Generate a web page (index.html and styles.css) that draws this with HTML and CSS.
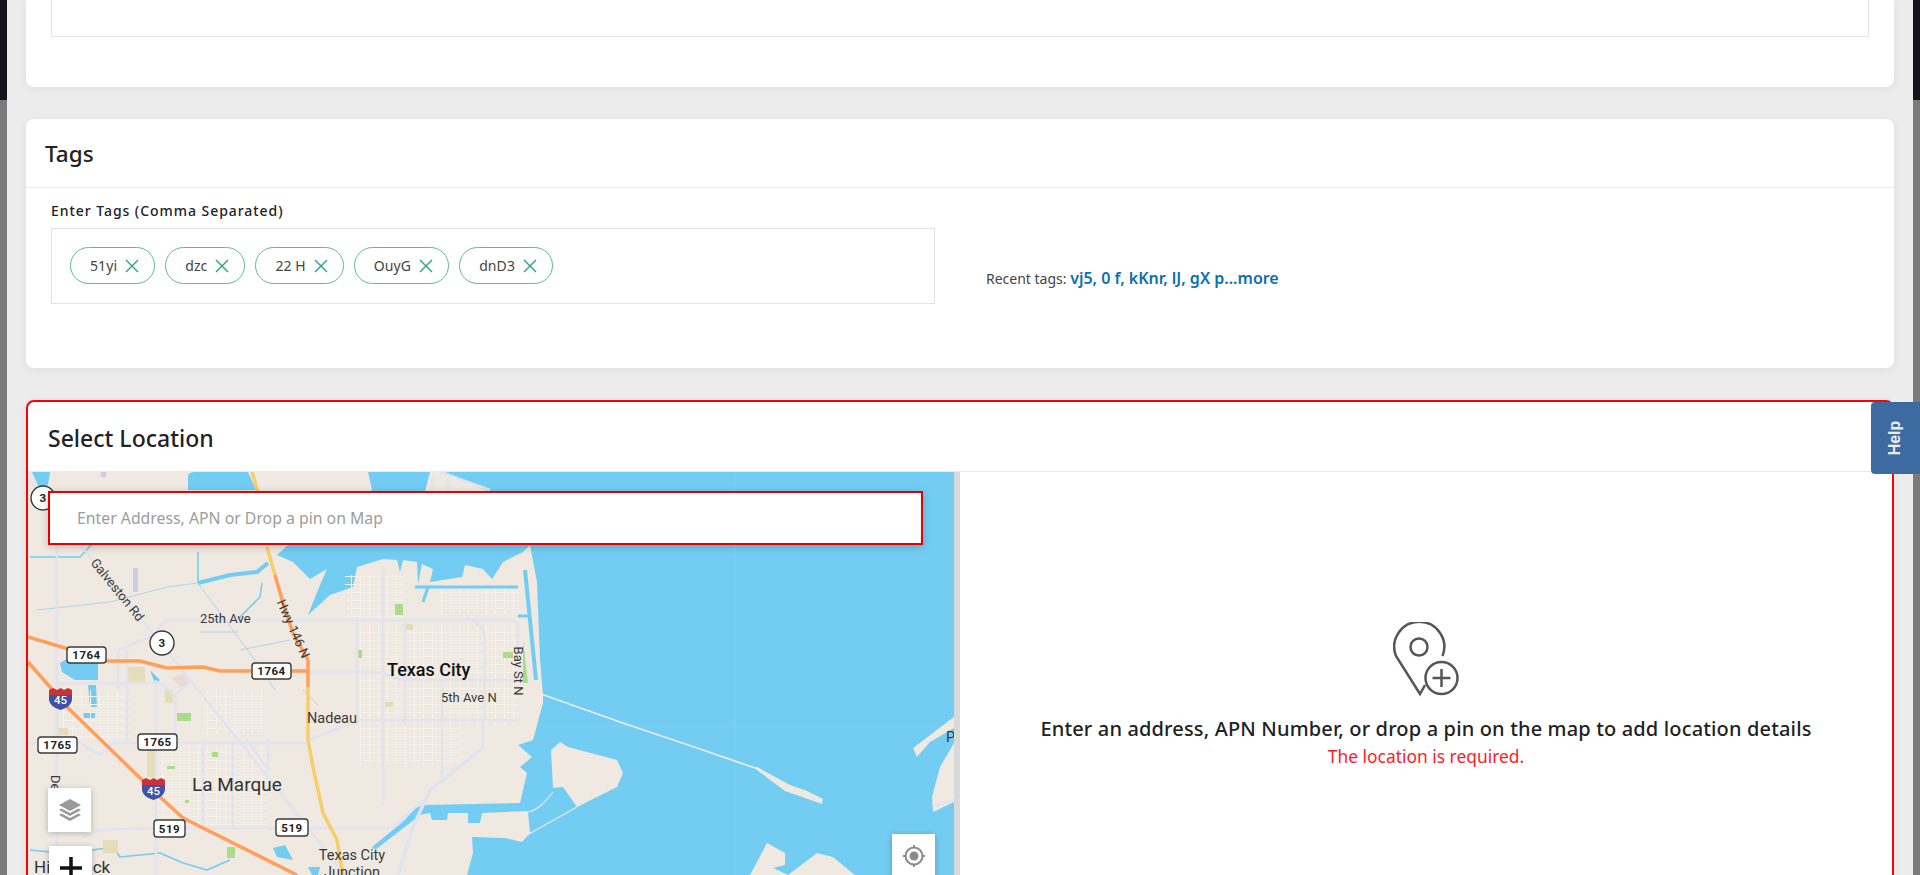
FILE: index.html
```html
<!DOCTYPE html>
<html lang="en">
<head>
  <meta charset="UTF-8">
  <title>Select Location</title>
  <link rel="stylesheet" href="styles.css">
</head>
<body>
  <div class="edge"></div>

  <main class="page">
    <section class="card card-top">
      <div class="top-box"></div>
    </section>

    <section class="card card-tags">
      <h2 class="card-title">Tags</h2>
      <div class="tags-body">
        <div class="tags-field">
          <label class="tags-label">Enter Tags (Comma Separated)</label>
          <div class="tags-box">
            <span class="chip">51yi <svg viewBox="0 0 14 14"><path d="M1 1l12 12M13 1L1 13"/></svg></span>
            <span class="chip">dzc <svg viewBox="0 0 14 14"><path d="M1 1l12 12M13 1L1 13"/></svg></span>
            <span class="chip">22 H <svg viewBox="0 0 14 14"><path d="M1 1l12 12M13 1L1 13"/></svg></span>
            <span class="chip">OuyG <svg viewBox="0 0 14 14"><path d="M1 1l12 12M13 1L1 13"/></svg></span>
            <span class="chip">dnD3 <svg viewBox="0 0 14 14"><path d="M1 1l12 12M13 1L1 13"/></svg></span>
          </div>
        </div>
        <p class="recent">Recent tags: <a href="#">vj5, 0 f, kKnr, lJ, gX p...more</a></p>
      </div>
    </section>

    <section class="card card-location">
      <h2 class="card-title">Select Location</h2>
      <div class="location-body">
        <div class="map">
          <svg class="map-art" viewBox="28 472 926 403" width="926" height="403">
            <defs>
              <pattern id="streets" width="9" height="8" patternUnits="userSpaceOnUse">
                <path d="M0 .5H9M.5 0V8" stroke="#f4f0ea" stroke-width="1" fill="none"/>
              </pattern>
            </defs>

            <rect class="water" x="28" y="472" width="926" height="403"/>
            <path class="seam" d="M735 472V875M28 726H954"/>

            <!-- mainland -->
            <path class="land" d="M28 472H368L372 490L287 546L277 555L293 562L310 579L327 569L320 585L308 615L330 595L353 587L357 567L383 559L397 560L400 572L403 560L417 562L418 584L422 564L433 569L430 582L462 577L465 565L483 569L492 579L503 562L523 552L530 545L537 582L540 659L543 695L543 703L533 740L518 745L532 757L520 767L527 773L520 803L528 812L530 833L522 842L505 838L472 837L473 853L467 875H28Z"/>
            <path class="land" d="M551 750L560 742L568 747L617 760L623 773L617 787L577 807L563 787L553 788Z"/>
            <path class="land" d="M750 875L767 843L785 853L785 865L773 868L788 875L817 853L833 857L855 875Z"/>
            <path class="land" d="M913 748L954 717V728L930 742L917 757Z"/>
            <path class="land" d="M954 743L940 767L932 797L933 812L954 802Z"/>
            <path class="land" d="M425 492L430 472H445L490 492Z"/>
            <path class="dike" d="M541 694L620 722L700 749L755 768"/>
            <path class="land" d="M753 767L757 767L790 785L805 790L823 799L822 804L785 791Z"/>
            <path class="thin" d="M553 792C545 802 538 810 528 812M577 807L527 835"/>

            <!-- water cut into the land -->
            <path class="water" d="M188 490V476Q189 472 195 472H248L256 490Z"/>
            <path class="water" d="M32 472H50L48 485L40 490Z"/>
            <path class="water" d="M425 805L520 803L528 811L482 813L480 823L468 823L468 813L448 813L447 820L432 820L430 813L420 815L410 823L375 850L372 847L405 820L415 808Z"/>
            <path class="water" d="M60 663L70 657H98V680H75L62 672Z"/>
            <path class="water" d="M88 685H96L97 707H90Z"/>
            <path class="water" d="M83 712H95V718H84Z"/>
            <path class="water" d="M273 848L285 845L293 860L277 857Z"/>
            <path class="water" d="M308 867H320L318 875H312Z"/>
            <path class="water" d="M150 670L160 680L155 684Z"/>
            <path class="creek" d="M525 570L530 620L536 680" stroke-width="4"/>
            <path class="creek" d="M415 587H518M428 587L423 602M518 616H528" stroke-width="3"/>
            <path class="creek" d="M198 583L230 575L257 572L268 563" stroke-width="4"/>
            <path class="creek" d="M198 583V552M262 583L260 597L237 620M30 557H80L93 543" stroke-width="1.6"/>
            <path class="creek" d="M30 850L60 853L93 850L113 847L120 857L160 853L183 863L207 870L230 860" stroke-width="1.6"/>
            <path class="brook" d="M37 610L110 602L167 587L198 583L257 663L275 690M200 632H238M240 650L290 640M303 690L318 705"/>

            <!-- street grids -->
            <rect class="grid" x="360" y="625" width="158" height="100"/>
            <rect class="grid" x="345" y="575" width="60" height="45"/>
            <rect class="grid" x="60" y="690" width="70" height="50"/>
            <rect class="grid" x="158" y="745" width="110" height="80"/>
            <rect class="grid" x="360" y="725" width="100" height="40"/>
            <rect class="grid" x="205" y="690" width="60" height="45"/>
            <rect class="grid" x="440" y="590" width="80" height="25"/>

            <!-- patches -->
            <path class="park" d="M395 604h8v11h-8zM503 652h10v6h-10zM523 640l5 43h-5zM177 713h14v8h-14zM167 766h8v3h-8zM212 752h6v5h-6zM227 847h8v11h-8zM185 800h4v3h-4zM358 650h4v8h-4z"/>
            <path class="tan" d="M128 667h17v16h-17zM165 690h8v13h-8zM147 750h8v27h-8zM57 728h11v7h-11zM385 702h8v5h-8zM405 624h8v6h-8zM103 840h15v13h-15z"/>
            <path class="pink" d="M172 678l12-5 5 10-8 5z"/>
            <path class="plot" d="M101 472h5v5h-5zM133 568h5v24h-5z"/>

            <!-- roads -->
            <path class="road" d="M28 478L82 547L150 630L260 767L345 875"/>
            <path class="road" d="M57 545V875"/>
            <path class="road" d="M118 690V650L150 637L167 620H467Q517 618 518 624V659"/>
            <path class="road" d="M467 618Q485 625 485 640V662"/>
            <path class="road" d="M308 672H358L383 673L400 680H520"/>
            <path class="road" d="M357 619V725M383 569V805M405 620V725M442 672V782M485 660V720"/>
            <path class="road" d="M308 740L360 720H520"/>
            <path class="road" d="M28 743H80L100 755L113 743H308"/>
            <path class="road" d="M57 683H160L175 695V740M190 682L175 695M127 650V740M156 680V875"/>
            <path class="road" d="M203 740V830M233 740V830M268 740V770L247 740"/>
            <path class="road" d="M83 837L100 830L153 828H393L423 800"/>
            <path class="road wide" d="M483 748L430 790L413 827L398 875"/>
            <path class="road" d="M483 720V748M933 806L954 800"/>
            <path class="road" d="M440 472L490 490M432 478V490M448 478V490"/>

            <path class="hwy-yellow" d="M252 472L258 492M267 547L275 575"/>
            <path class="hwy-orange" d="M275 575L283 603L293 633L308 660V687"/>
            <path class="hwy-yellow" d="M308 687V740L313 767L323 813L337 840L343 875"/>
            <path class="hwy-orange" d="M28 637L65 648L107 661H140L167 668L203 667L220 671H308"/>
            <path class="hwy-orange" d="M28 662L50 687L67 707L140 778L160 797L183 818L297 875"/>

            <!-- labels -->
            <text class="lbl" x="200" y="623">25th Ave</text>
            <text class="lbl" transform="translate(117 590) rotate(51)" text-anchor="middle" dy="4">Galveston Rd</text>
            <text class="lbl" transform="translate(293 629) rotate(66)" text-anchor="middle" dy="4">Hwy 146 N</text>
            <text class="lbl" transform="translate(518 671) rotate(90)" text-anchor="middle" dy="4">Bay St N</text>
            <text class="lbl" transform="translate(55 775) rotate(90)" dy="4">Delany Rd</text>
            <text class="city" x="387" y="676">Texas City</text>
            <text class="lbl" x="441" y="702">5th Ave N</text>
            <text class="lbl big" x="307" y="723">Nadeau</text>
            <text class="town" x="192" y="791">La Marque</text>
            <text class="lbl big" x="352" y="860" text-anchor="middle">Texas City</text>
            <text class="lbl big" x="352" y="877" text-anchor="middle">Junction</text>
            <text class="town small" x="34" y="873">Hitchcock</text>
            <text class="lbl big" x="946" y="742">P</text>

            <!-- shields -->
            <g class="shield"><circle cx="43" cy="498" r="12"/><text x="43" y="502">3</text></g>
            <g class="shield"><circle cx="162" cy="643" r="12"/><text x="162" y="647">3</text></g>
            <g class="shield"><rect x="67" y="647" width="39" height="16" rx="3"/><text x="86.500" y="659">1764</text></g>
            <g class="shield"><rect x="252" y="663" width="39" height="16" rx="3"/><text x="271.500" y="675">1764</text></g>
            <g class="shield"><rect x="38" y="737" width="39" height="16" rx="3"/><text x="57.500" y="749">1765</text></g>
            <g class="shield"><rect x="138" y="734" width="39" height="16" rx="3"/><text x="157.500" y="746">1765</text></g>
            <g class="shield"><rect x="154" y="820" width="31" height="17" rx="3"/><text x="169.500" y="833">519</text></g>
            <g class="shield"><rect x="276" y="819" width="32" height="17" rx="3"/><text x="292" y="832">519</text></g>
            <g class="interstate">
              <path class="i-blue" d="M49 692H72V700Q71 707 60.500 710Q50 707 49 700Z"/>
              <path class="i-red" d="M49 695V690L53 688L57 690L60.500 688L64 690L68 688L72 690V695Z"/>
              <text x="60.500" y="704">45</text>
            </g>
            <g class="interstate">
              <path class="i-blue" d="M142 782H165V790Q164 797 153.500 800Q143 797 142 790Z"/>
              <path class="i-red" d="M142 785V780L146 778L150 780L153.500 778L157 780L161 778L165 780V785Z"/>
              <text x="153.500" y="795">45</text>
            </g>
          </svg>

          <input class="map-search" type="text" placeholder="Enter Address, APN or Drop a pin on Map">

          <button class="map-btn btn-layers" aria-label="Layers">
            <svg viewBox="0 0 24 24" width="24" height="24"><path d="M12 1l11 6-11 6L1 7z"/><path d="M3.500 10.500L12 15l8.500-4.500L23 12l-11 6L1 12z"/><path d="M3.500 15.500L12 20l8.500-4.500L23 17l-11 6L1 17z"/></svg>
          </button>
          <button class="map-btn btn-zoom" aria-label="Zoom in">
            <svg viewBox="0 0 22 22" width="22" height="22"><path d="M0 11H22M11 0V22"/></svg>
          </button>
          <button class="map-btn btn-locate" aria-label="My location">
            <svg viewBox="0 0 24 24" width="24" height="24"><circle class="ring" cx="12" cy="12" r="8.500"/><circle class="dot" cx="12" cy="12" r="4.500"/><path class="ring" d="M12 1v3M12 20v3M1 12h3M20 12h3"/></svg>
          </button>
        </div>

        <div class="location-side">
          <svg class="pin-add" viewBox="0 0 66 75" width="66" height="75">
            <path d="M49.500 34A25 25 0 1 0 3 34L27 72L32 63"/>
            <circle cx="26" cy="25" r="8.500"/>
            <circle cx="48.500" cy="56" r="16"/>
            <path d="M48.500 47V65M39.500 56H57.500"/>
          </svg>
          <p class="side-text">Enter an address, APN Number, or drop a pin on the map to add location details</p>
          <p class="side-error">The location is required.</p>
        </div>
      </div>
    </section>
  </main>

  <div class="edge edge-right"></div>

  <a class="help-tab" href="#"><span>Help</span></a>
</body>
</html>
```

FILE: styles.css
```css
* { box-sizing: border-box; margin: 0; padding: 0; }
html, body { height: 100%; overflow: hidden; }
body {
  display: flex;
  font: 14px/1.4 "Noto Sans", sans-serif;
  color: #222;
  background: #ececec;
}
.edge {
  flex: 0 0 7px;
  background: linear-gradient(to bottom, #16161c 100px, #7a7a7a 100px);
}
.page {
  flex: 1;
  min-width: 0;
  padding: 0 19px;
  display: flex;
  flex-direction: column;
  gap: 32px;
}
.card {
  flex: none;
  background: #fff;
  border-radius: 8px;
  box-shadow: 0 2px 10px rgba(0,0,0,0.06);
}
.card-title {
  font-size: 22.500px;
  font-weight: 500;
  line-height: 66px;
  padding: 2px 0 0 19px;
  border-bottom: 1px solid #eaeaea;
}

/* top card, scrolled mostly out of view */
.card-top {
  height: 87px;
  padding: 0 25px;
  border-radius: 0 0 8px 8px;
}
.top-box {
  height: 37px;
  border: 1px solid #e4e4e4;
  border-top: none;
}

/* tags */
.card-tags { height: 249px; }
.tags-body {
  display: flex;
  align-items: flex-start;
  padding: 13px 25px 0;
}
.tags-field { flex: 0 0 884px; }
.tags-label {
  display: block;
  font-size: 14px;
  font-weight: 500;
  line-height: 20px;
  letter-spacing: .95px;
  margin-bottom: 7px;
}
.tags-box {
  height: 76px;
  padding: 18px;
  display: flex;
  gap: 10px;
  border: 1px solid #e2e2e2;
}
.chip {
  display: inline-flex;
  align-items: center;
  gap: 8px;
  height: 37px;
  padding: 0 15px 0 19px;
  font-size: 14px;
  letter-spacing: .1px;
  color: #444;
  border: 1px solid #5cbb9c;
  border-radius: 19px;
}
.chip svg {
  width: 14px;
  height: 14px;
  stroke: #24a57c;
  stroke-width: 1.4;
  fill: none;
}
.recent {
  margin: 66px 0 0 51px;
  font-size: 14px;
  color: #444;
}
.recent a {
  color: #0a70b3;
  font-size: 16px;
  font-weight: 600;
  text-decoration: none;
}

/* location */
.card-location {
  position: relative;
  height: 700px;
  border: 2px solid #f00;
}
.card-location .card-title {
  font-size: 23px;
  padding: 3px 0 0 20px;
}
.location-body { display: flex; }
.map {
  position: relative;
  flex: 0 0 926px;
  height: 403px;
  overflow: hidden;
}
.map-art { display: block; }
.water { fill: #73cdf2; }
.seam { stroke: #80d2f3; stroke-width: 1; fill: none; }
.land { fill: #efe9e2; }
.thin { fill: none; stroke: #efe9e2; stroke-width: 1.2; }
.dike { fill: none; stroke: #efe9e2; stroke-width: 1.800; }
.creek { fill: none; stroke: #73cdf2; stroke-linejoin: round; }
.brook { fill: none; stroke: #a6d8ee; stroke-width: 1; }
.grid { fill: url(#streets); }
.park { fill: #a8de8a; }
.tan { fill: #e5dcb8; }
.pink { fill: #ecd9da; }
.plot { fill: #c8cee3; }
.road {
  fill: none;
  stroke: #e1e3f0;
  stroke-width: 2.500;
  stroke-linejoin: round;
}
.road.wide { stroke-width: 3.500; }
.hwy-yellow, .hwy-orange { fill: none; stroke-width: 3.500; stroke-linejoin: round; }
.hwy-yellow { stroke: #f4cf6a; }
.hwy-orange { stroke: #ff9f59; }
.map text { font-family: Roboto, sans-serif; }
.lbl { font-size: 13px; fill: #3a3a3a; }
.lbl.big { font-size: 14.500px; }
.city { font-size: 18px; font-weight: 500; fill: #111; }
.town { font-size: 19px; fill: #333; }
.town.small { font-size: 17px; }
.shield circle, .shield rect { fill: #fff; stroke: #3a3a3a; stroke-width: 1.400; }
.shield text {
  font-size: 11.500px;
  font-weight: 700;
  letter-spacing: .5px;
  text-anchor: middle;
  fill: #222;
}
.i-blue { fill: #3f51a8; }
.i-red { fill: #c8333a; }
.interstate text {
  font-size: 11.500px;
  font-weight: 500;
  text-anchor: middle;
  fill: #fff;
}

.map-search {
  position: absolute;
  left: 20px;
  top: 19px;
  width: 875px;
  height: 54px;
  padding: 0 27px;
  font: 15.800px "Noto Sans", sans-serif;
  background: #fff;
  border: 2px solid #e60000;
  border-radius: 0;
  box-shadow: 0 2px 8px rgba(0,0,0,0.2);
  outline: none;
}
.map-search::placeholder { color: #9c9c9c; opacity: 1; }
.map-btn {
  position: absolute;
  width: 43px;
  height: 44px;
  display: flex;
  align-items: center;
  justify-content: center;
  background: #fff;
  border: none;
  box-shadow: 0 1px 6px rgba(0,0,0,0.25);
}
.btn-layers { left: 20px; top: 316px; }
.btn-layers path { fill: #9a9a9a; }
.btn-zoom { left: 21px; top: 374px; }
.btn-zoom svg { overflow: visible; }
.btn-zoom path { stroke: #111; stroke-width: 3.500; fill: none; }
.btn-locate { left: 864px; top: 362px; }
.btn-locate .ring { fill: none; stroke: #8a8a8a; stroke-width: 2; }
.btn-locate .dot { fill: #8a8a8a; }

.location-side {
  flex: 1;
  min-width: 0;
  height: 403px;
  padding-top: 150px;
  border-left: 6px solid #d9d9d9;
  text-align: center;
}
.pin-add {
  display: block;
  margin: 0 auto 18px;
  fill: none;
  stroke: #565656;
  stroke-width: 2.500;
}
.side-text {
  font-size: 20px;
  font-weight: 500;
  line-height: 28px;
  letter-spacing: .15px;
}
.side-error {
  font-size: 17.400px;
  line-height: 26px;
  color: #ff1a2b;
}

.help-tab {
  position: absolute;
  left: 1871px;
  top: 402px;
  width: 49px;
  height: 72px;
  display: flex;
  align-items: center;
  justify-content: center;
  background: #3d6ba1;
  border-radius: 4px 0 0 4px;
  text-decoration: none;
}
.help-tab span {
  transform: rotate(-90deg);
  font: 700 16px "Liberation Sans", sans-serif;
  color: #e8edf3;
}
```
